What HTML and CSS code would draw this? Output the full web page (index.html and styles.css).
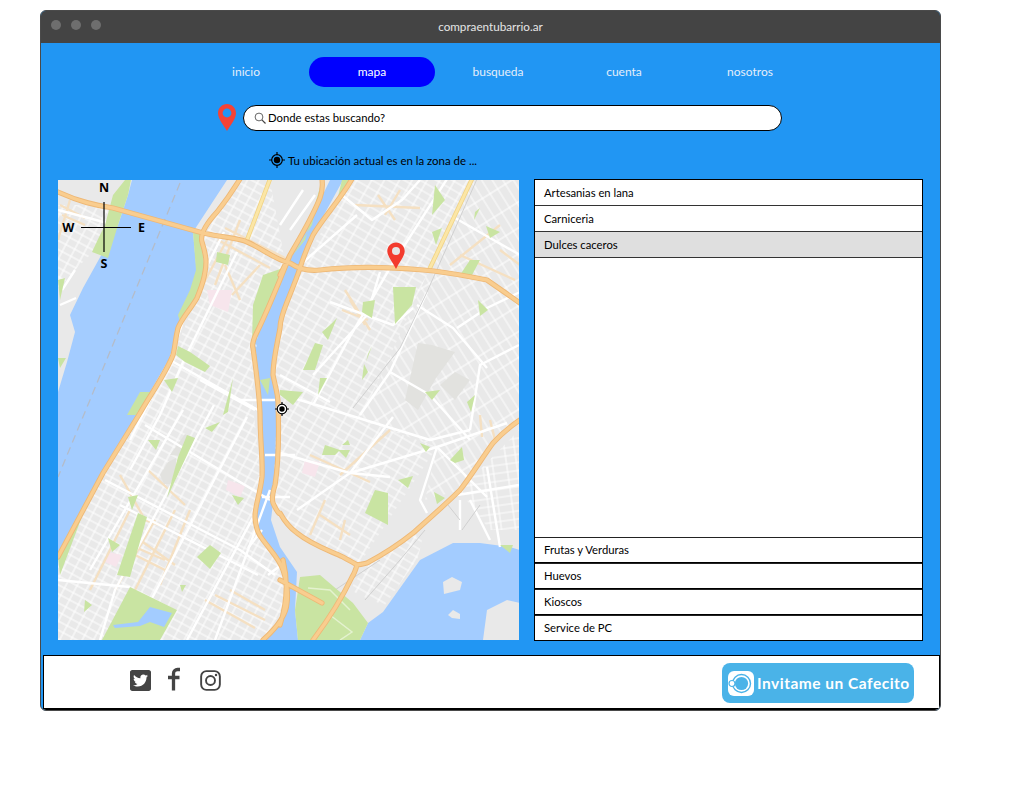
FILE: index.html
```html
<!DOCTYPE html>
<html lang="es">
<head>
<meta charset="utf-8">
<title>compraentubarrio.ar</title>
<link rel="stylesheet" href="styles.css">
</head>
<body>
<div class="window">
  <header class="titlebar">
    <div class="dots"><span class="dot"></span><span class="dot"></span><span class="dot"></span></div>
    <div class="title">compraentubarrio.ar</div>
  </header>
  <div class="content">
    <nav class="nav">
      <a class="tab">inicio</a>
      <a class="tab active">mapa</a>
      <a class="tab">busqueda</a>
      <a class="tab">cuenta</a>
      <a class="tab">nosotros</a>
    </nav>
    <div class="search-row">
      <svg class="pin" viewBox="0 0 18 27"><path fill="#f44336" fill-rule="evenodd" d="M9 0c5 0 9 4 9 9.300 0 5.200-5.500 12-9 17.700C5.500 21.300 0 14.500 0 9.300 0 4 4 0 9 0zm0 4.600a4.400 4.400 0 1 0 0 8.800 4.400 4.400 0 0 0 0-8.800z"/></svg>
      <div class="search">
        <svg class="glass" viewBox="0 0 12 12"><circle cx="5" cy="5" r="3.900" fill="none" stroke="#555" stroke-width="0.900"/><path d="M7.900 7.900 11.500 11.500" stroke="#444" stroke-width="1.200"/></svg>
        <span>Donde estas buscando?</span>
      </div>
    </div>
    <div class="location">
      <svg class="target" viewBox="0 0 16 16"><circle cx="8" cy="8" r="5.300" fill="none" stroke="#000" stroke-width="1.200"/><circle cx="8" cy="8" r="3.200"/><path d="M8 0v3M8 13v3M0 8h3M13 8h3" stroke="#000" stroke-width="1.200"/></svg>
      <span>Tu ubicación actual es en la zona de ...</span>
    </div>
    <div class="main">
      <div class="map">
        <svg class="map-svg" viewBox="58 180 461 460">
          <defs>
            <pattern id="gridM" width="30" height="8" patternUnits="userSpaceOnUse" patternTransform="rotate(28)">
              <path d="M0 1H30" stroke="#fff" stroke-width="1"/><path d="M3 0V8M13 0V8M23 0V8" stroke="#fff" stroke-width="1"/>
            </pattern>
            <pattern id="gridB" width="24" height="8" patternUnits="userSpaceOnUse" patternTransform="rotate(30)">
              <path d="M0 2H24" stroke="#fff" stroke-width="0.900"/><path d="M4 0V8M15 0V8" stroke="#fff" stroke-width="1"/>
            </pattern>
            <pattern id="gridE" width="22" height="9" patternUnits="userSpaceOnUse" patternTransform="rotate(58)">
              <path d="M0 2H22" stroke="#fff" stroke-width="0.900"/><path d="M6 0V9" stroke="#fff" stroke-width="1"/>
            </pattern>
            <pattern id="gridS" width="24" height="8" patternUnits="userSpaceOnUse" patternTransform="rotate(-8)">
              <path d="M0 2H24" stroke="#fff" stroke-width="0.900"/><path d="M5 0V8M15 0V8" stroke="#fff" stroke-width="1"/>
            </pattern>
            <path id="highways" d="M58 192C80 202 95 205 113 208L203 233C225 238 240 238 247 242C262 248 275 260 290 263C300 270 310 271 320 270C345 267 380 266 423 270C450 272 470 277 487 280L520 303
              M240 179C232 192 225 202 217 212C205 225 200 235 202 242C206 255 207 262 205 272C203 285 199 292 197 298C190 310 182 318 178 328C175 340 175 348 173 355C165 375 150 395 140 413L103 473L58 557
              M290 255C282 275 268 310 257 332C253 340 252 345 253 348C256 370 259 390 260 413C260 440 263 460 262 477C260 495 255 505 255 517C256 530 259 535 263 540C272 552 280 560 283 570C288 585 288 595 287 603C286 618 272 632 263 640
              M352 179C340 200 323 218 313 235C307 248 303 258 300 268C296 280 291 292 287 302C283 312 280 320 280 328C277 345 273 360 273 375C275 385 278 395 278 402C279 430 279 460 275 485C272 495 272 500 273 503C277 512 280 515 280 513C285 522 290 528 297 533C312 545 328 550 343 557C350 561 354 563 357 565C355 572 354 574 352 577C342 598 328 620 313 640
              M357 565C361 564 364 564 367 563C382 555 398 545 413 533C430 518 446 504 460 490C472 475 482 458 493 443C502 433 511 426 520 420
              M322 179C323 188 322 193 320 198C312 218 300 238 290 255L280 275
              M280 580L322 603
              M283 560C288 580 288 600 280 625"/>
          </defs>
          <rect x="58" y="180" width="461" height="460" fill="#e9e9e9"/>
          <g fill="#a3ccff">
            <path d="M132 180 128 195 118 225 103 252 83 288 70 315 75 332 67 362 58 392V557L103 473 140 413 150 392 173 352 180 322 197 275 193 232 227 180z"/>
            <path d="M330 180H343L313 235 300 268 287 302 280 328 273 375 278 402 279 450 275 485 273 503 271 520 280 547 297 572 295 610 298 640H263L287 610 287 595 281 565 262 540 255 517 262 477 260 413 253 348 257 332 283 270 303 235z"/>
            <path d="M360 640 368 623 383 612 420 560 453 543H480L510 547 520 550V640z"/>
          </g>
          <path fill="#e9e9e9" d="M483 640 487 610 507 600 520 603V640zM443 582 452 577 462 582 460 590 444 594zM448 615 453 610 460 614 460 619 452 618z"/>
          <path d="M180 183 58 477" stroke="#b4bcc9" stroke-width="1.300" stroke-dasharray="8 5" fill="none"/>
          <g>
            <path fill="url(#gridM)" d="M58 205H115L100 245 75 270 58 290z"/>
            <path fill="url(#gridM)" d="M240 180H270L285 262 258 332 252 400 262 480 255 517 262 540 282 570 287 603 263 640H58V557L103 473 173 355 197 298 205 272 202 242 217 212z"/>
            <path fill="url(#gridB)" d="M352 180H470L430 268 395 345 360 420 437 447 360 563 297 533 280 513 273 503 277 410 273 375 280 328 300 268z"/>
            <path fill="url(#gridE)" d="M470 180H519V420L493 443 460 490 425 500 437 447 360 420 395 345 430 268z"/>
            <path fill="url(#gridS)" d="M460 490 519 430V530L490 530 470 505z"/>
            <path fill="url(#gridB)" d="M367 563 413 533 422 540 418 558 385 605 370 600 350 590z"/>
          </g>
          <g fill="#e2e2df">
            <path d="M185 434 194 438 186 456 170 455z"/>
            <path d="M168 462 176 458 176 470 172 484 164 484 160 475z"/>
            <path d="M418 343 432 345 455 352 436 378 418 410 405 400z"/>
            <path d="M440 385 455 372 470 380 455 400z"/>
          </g>
          <g fill="#f7e5ec">
            <path d="M207 290 232 290 228 312 210 305z"/><path d="M305 460 320 462 315 477 302 473z"/>
            <path d="M108 552 122 555 116 567 105 562z"/><path d="M228 480 245 486 240 497 226 490z"/>
          </g>
          <g fill="none" stroke="#f5e0c2" stroke-width="2.400">
            <path d="M120 475 145 520 160 525M148 470 185 505M130 510 90 590M155 520 115 590M175 510 135 590M190 510 160 585"/>
            <path d="M135 555 165 570M140 540 175 565M130 545 165 560M215 595 265 620M205 600 255 628M230 590 265 610"/>
            <path d="M60 205 85 218M62 215 85 225M70 200 58 240"/>
            <path d="M228 238 200 290M240 220 215 285M225 228 285 258M218 240 270 268M225 265 240 300M260 265 232 295"/>
            <path d="M355 205 420 208M378 195 395 220M400 190 385 215M500 225 450 265M500 250 520 265M460 255 515 280"/>
            <path d="M345 290 370 330M350 300 365 325M342 310 368 320"/>
            <path d="M310 455 370 482M340 475 390 430M320 515 350 535M325 500 310 535M345 520 340 540M490 420 495 440M480 415 482 437"/>
          </g>
          <g fill="none" stroke="#fff" stroke-width="2.400" stroke-linejoin="round">
            <path d="M237 252 183 362 160 415 130 470M224 232 190 300 170 360 130 440"/>
            <path d="M183 410 90 570M214 405 115 590 100 640M247 417 160 583 130 640M257 510 187 640M270 490 215 640"/>
            <path d="M58 580 130 587M105 480 240 550 275 575M145 425 270 500M200 380 255 410M170 360 258 410M120 505 258 575"/>
            <path d="M60 305 76 298M58 210 115 225M62 290 75 270"/>
            <path d="M447 179 390 268 347 342 313 405M427 292 390 372 360 415M357 215 300 265M455 218 520 255M417 305 453 328 487 368M457 328 487 308 520 292M330 302 393 325 413 308M280 375 330 402M380 272 367 315 313 375M342 195 372 220 402 200 420 180"/>
            <path d="M280 453 350 473 390 477M350 473 437 447 507 423M297 510 350 473 393 417M437 447 420 500 427 513M437 447 487 497M487 467 500 547M457 495 519 485M300 400 430 440 470 430M390 372 430 395 470 440M519 345 480 365 470 430"/>
            <path d="M275 400H240M265 455H295M262 497H290M262 530 248 548M281 565 268 575"/>
            <path d="M460 530V500M470 500 490 540"/>
            <path d="M303 190 280 225M315 195 290 230M282 395 300 400"/>
          </g>
          <g fill="none" stroke="#d0d0d0" stroke-width="1">
            <path d="M477 179 427 292 400 348 353 408M425 530 400 560 365 600M460 520 448 505M480 505 462 530M335 590 380 560"/>
          </g>
          <g fill="#c9e4a2">
            <path d="M125 180H131L128 195 118 225 108 258 92 252 100 235 105 225 113 195z"/>
            <path d="M193 232 200 230 205 272 197 298 180 322 178 315 190 290 196 270z"/>
            <path d="M217 252 230 255 228 265 216 262z"/>
            <path d="M263 275 283 268 258 332 252 342 253 305z"/>
            <path d="M178 346 190 352 210 366 205 372 185 362 176 355z"/>
            <path d="M140 392 153 392 136 415 127 415z"/>
            <path d="M223 415 233 378 228 412z"/>
            <path d="M58 280 65 278 60 300z"/><path d="M58 358 66 358 60 368z"/>
            <path d="M393 287H416L412 305 395 324z"/>
            <path d="M460 275 470 260H480L472 275z"/>
            <path d="M315 343 323 345 315 370 303 370z"/>
            <path d="M280 390 303 392 293 405 280 395z"/>
            <path d="M320 378 327 378 318 395z"/>
            <path d="M130 587 177 610 160 640H102z"/>
            <path d="M138 513 147 517 130 577 117 575z"/>
            <path d="M187 435 195 438 167 498 178 457z"/>
            <path d="M197 557 210 545 221 553 210 569z"/>
            <path d="M365 513 375 490 388 493 388 525z"/>
            <path d="M450 460 462 447 464 460 455 463z"/>
            <path d="M500 545H513L510 553z"/>
            <path d="M300 577 320 575 353 603 368 623 360 640H298L295 610z"/>
            <path d="M58 557 85 510 103 473 92 490 60 575z"/>
            <path d="M322 180 305 240 293 255 312 225z"/>
            <path d="M342 180H352L336 205z"/>
            <path d="M435 185 445 200 432 215z"/>
            <path d="M432 232 442 228 436 245z"/>
            <path d="M486 226 500 232 490 238z"/><path d="M475 212 480 208 474 220z"/>
            <path d="M478 300 488 310 480 316z"/>
            <path d="M330 325 337 318 328 340 322 332z"/>
            <path d="M363 302 375 300 372 318 362 312zM260 380 270 378 268 395z"/>
            <path d="M368 354 372 346 366 362zM364 364 368 372 362 380zM425 392 440 390 432 400zM467 402 475 395 471 412z"/>
            <path d="M164 380 178 378 172 392z"/>
            <path d="M338 450 350 450 346 458zM342 445 350 445 348 440zM325 445 340 450 335 455 322 455z"/>
            <path d="M398 480 413 476 408 488zM420 443 430 447 426 452zM434 492 445 498 437 504z"/>
            <path d="M148 440 160 440 156 450zM128 497 138 495 132 510zM108 538 120 545 112 552zM85 600 92 605 84 612zM205 428 220 422 212 432zM180 585 186 585 182 592zM232 495 244 498 238 505z"/>
          </g>
          <path fill="#a3ccff" d="M150 607 172 613 164 627 150 622 140 626 115 628 113 625 138 622z"/>
          <path fill="none" stroke="#e4f2cf" stroke-width="1.500" d="M308 588 330 590 350 610M330 615 352 632 340 640M312 640 340 600"/>
          <g fill="none" stroke-linejoin="round" stroke-linecap="round">
            <path d="M472 179 430 268M270 179 247 240" stroke="#f1d384" stroke-width="4.400"/>
            <path d="M472 179 430 268M270 179 247 240" stroke="#fbe6a6" stroke-width="2.800"/>
            <use href="#highways" stroke="#eeb876" stroke-width="5.200"/>
            <use href="#highways" stroke="#f9cd8f" stroke-width="3.400"/>
          </g>
          <g>
            <path fill="#f33b2e" fill-rule="evenodd" d="M396 242.500c4.800 0 8.700 3.900 8.700 8.700 0 5.300-5.800 11.400-8.700 17.800-2.900-6.400-8.700-12.500-8.700-17.800 0-4.800 3.900-8.700 8.700-8.700z"/>
            <circle cx="396" cy="251" r="4" fill="#e6e6e6"/>
          </g>
          <g transform="translate(275 402)">
            <circle cx="7" cy="7" r="5.800" fill="#fff"/>
            <circle cx="7" cy="7" r="4.800" fill="none" stroke="#000" stroke-width="1.200"/>
            <circle cx="7" cy="7" r="2.700"/>
            <path d="M7 0v2.800M7 11.200V14M0 7h2.800M11.200 7H14" stroke="#000" stroke-width="1.200"/>
          </g>
          <g stroke="#000" stroke-width="1.200">
            <path d="M104 202V252M81 227.500H131"/>
          </g>
          <g class="compass">
            <text x="104" y="192">N</text>
            <text x="68.300" y="232">W</text>
            <text x="141.500" y="232">E</text>
            <text x="104" y="268">S</text>
          </g>
        </svg>
      </div>
      <aside class="list">
        <div class="item">Artesanias en lana</div>
        <div class="item">Carniceria</div>
        <div class="item selected">Dulces caceros</div>
        <div class="panel"></div>
        <div class="item boxed">Frutas y Verduras</div>
        <div class="item boxed">Huevos</div>
        <div class="item boxed">Kioscos</div>
        <div class="item boxed">Service de PC</div>
      </aside>
    </div>
    <footer class="footer">
      <div class="social">
        <svg class="ic-tw" viewBox="0 0 448 448"><path fill="#444" d="M400 0H48C21.500 0 0 21.500 0 48v352c0 26.500 21.500 48 48 48h352c26.500 0 48-21.500 48-48V48c0-26.500-21.500-48-48-48zm-48.900 158.800c.2 2.800.2 5.700.2 8.500 0 86.700-66 186.600-186.600 186.600-37.200 0-71.700-10.800-100.700-29.400 5.300.6 10.400.8 15.800.8 30.700 0 58.900-10.400 81.400-28-28.800-.6-53-19.500-61.300-45.500 10.100 1.500 19.200 1.500 29.600-1.200-30-6.100-52.500-32.500-52.500-64.400v-.8c8.700 4.900 18.900 7.900 29.600 8.300a65.447 65.447 0 0 1-29.200-54.600c0-12.200 3.200-23.400 8.900-33.100 32.300 39.800 80.800 65.800 135.200 68.600-9.300-44.500 24-80.600 64-80.600 18.900 0 35.900 7.900 47.900 20.700 14.800-2.800 29-8.300 41.600-15.800-4.900 15.200-15.200 28-28.800 36.100 13.200-1.400 26-5.100 37.800-10.200-8.900 13.100-20.100 24.700-32.900 34z"/></svg>
        <svg class="ic-fb" viewBox="0 0 12 24"><path fill="none" stroke="#444" stroke-width="3.300" d="M5.500 23.500V6.500a4 4 0 0 1 4-4H12M0 10.500h11.500"/></svg>
        <svg class="ic-ig" viewBox="0 0 22 22"><rect x="1.200" y="1.200" width="19.600" height="19.600" rx="5.500" fill="none" stroke="#444" stroke-width="2"/><circle cx="11" cy="11" r="4.700" fill="none" stroke="#444" stroke-width="2"/><circle cx="16.800" cy="5.200" r="1.300" fill="#444"/></svg>
      </div>
      <a class="cafecito">
        <svg class="cafe-logo" viewBox="0 0 26 25"><rect width="26" height="25" rx="6" fill="#fff"/><circle cx="13.500" cy="12.500" r="9" fill="#fff" stroke="#4ab3e8" stroke-width="1.400"/><circle cx="13.500" cy="12.500" r="6.600" fill="#4ab3e8"/><circle cx="4" cy="12.500" r="3" fill="#fff" stroke="#4ab3e8" stroke-width="1.200"/></svg>
        <span>Invitame un Cafecito</span>
      </a>
    </footer>
  </div>
</div>
</body>
</html>
```
FILE: styles.css
```css
* { box-sizing: border-box; }
html, body { margin: 0; padding: 0; background: #fff; }
body {
  padding: 10px 0 0 40px;
  font-family: "Lato", "Noto Sans", sans-serif;
  font-size: 12px;
  color: #000;
}
.window {
  width: 901px;
  height: 701px;
  border: 1px solid #4a4a4a;
  border-radius: 6px;
  overflow: hidden;
  display: flex;
  flex-direction: column;
  background: #2196f3;
}
.titlebar {
  height: 32px;
  flex: none;
  background: #444;
  position: relative;
  display: flex;
  align-items: center;
  justify-content: center;
}
.dots {
  position: absolute;
  left: 10px;
  top: 9px;
  display: flex;
  gap: 10px;
}
.dot { width: 10px; height: 10px; border-radius: 50%; background: #6e6e6e; }
.title { color: #e6e6e6; font-size: 11.700px; padding-bottom: 2px; }
.content { flex: 1; display: flex; flex-direction: column; }
.nav { display: flex; padding: 14px 0 0 142px; }
.tab {
  width: 126px;
  height: 30px;
  display: flex;
  align-items: center;
  justify-content: center;
  padding-bottom: 2px;
  color: #e4eefa;
  border-radius: 15px;
}
.tab.active { background: #0000ff; color: #fff; }
.search-row { display: flex; align-items: center; padding: 17px 0 0 177px; gap: 7px; }
.pin { width: 18px; height: 27px; flex: none; }
.search {
  width: 539px;
  height: 26px;
  background: #fff;
  border: 1px solid #000;
  border-radius: 13px;
  display: flex;
  align-items: center;
  gap: 2px;
  padding-left: 10px;
  font-size: 11.300px;
}
.glass { width: 12px; height: 12px; }
.location {
  display: flex;
  align-items: center;
  gap: 3px;
  height: 16px;
  margin: 21px 0 0 228px;
  font-size: 11.450px;
}
.target { width: 16px; height: 16px; }
.main { display: flex; align-items: flex-start; margin: 11px 0 0 17px; gap: 15px; }
.map { width: 461px; height: 460px; margin-top: 1px; }
.map-svg { display: block; width: 461px; height: 460px; }
.compass text {
  font-family: "Noto Sans", sans-serif;
  font-weight: 700;
  font-size: 12.500px;
  text-anchor: middle;
}
.list {
  width: 389px;
  height: 462px;
  display: flex;
  flex-direction: column;
  background: #fff;
  border: 1px solid #000;
  border-bottom: 0;
}
.item {
  height: 26px;
  flex: none;
  display: flex;
  align-items: center;
  padding-left: 9px;
  background: #fff;
  border-bottom: 1px solid #333;
  font-size: 11.250px;
}
.item.boxed { border-top: 1px solid #222; border-bottom-color: #000; padding-bottom: 2px; }
.item.selected { background: #dfdfdf; }
.panel { flex: 1; }
.footer {
  margin: 14px 0 0 2px;
  width: 897px;
  height: 55px;
  background: #fff;
  border: 1px solid #000;
  border-bottom-width: 2px;
  display: flex;
  align-items: center;
  justify-content: space-between;
  padding: 0 25px 0 86px;
}
.social { display: flex; align-items: center; gap: 17px; margin-top: -3px; }
.ic-tw { width: 21px; height: 21px; }
.ic-fb { width: 12px; height: 24px; margin-top: -3px; }
.ic-ig { width: 21px; height: 21px; margin-left: 3px; }
.cafecito {
  width: 192px;
  height: 40px;
  margin-top: 2px;
  background: #4ab3e8;
  border-radius: 8px;
  display: flex;
  align-items: center;
  gap: 3px;
  padding-left: 6px;
  color: #fff;
  font-weight: 700;
  font-size: 15.500px;
  letter-spacing: 0.500px;
}
.cafe-logo { width: 26px; height: 25px; flex: none; }
```
